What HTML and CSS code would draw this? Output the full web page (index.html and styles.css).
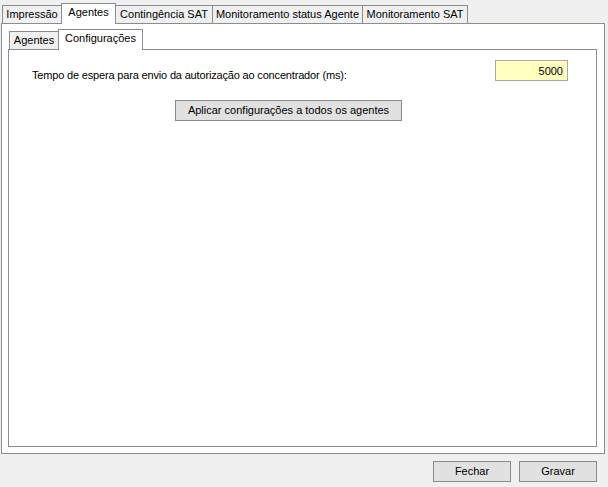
FILE: index.html
```html
<!DOCTYPE html>
<html lang="pt">
<head>
<meta charset="utf-8">
<link rel="stylesheet" href="styles.css">
</head>
<body>
<div class="window">
  <div class="tabstrip outer-strip">
    <div class="tab">Impressão</div>
    <div class="tab active">Agentes</div>
    <div class="tab">Contingência SAT</div>
    <div class="tab">Monitoramento status Agente</div>
    <div class="tab">Monitoramento SAT</div>
  </div>
  <div class="panel outer-panel">
    <div class="tabstrip inner-strip">
      <div class="tab">Agentes</div>
      <div class="tab active">Configurações</div>
    </div>
    <div class="panel inner-panel">
      <div class="field-row">
        <span class="label">Tempo de espera para envio da autorização ao concentrador (ms):</span>
        <input class="num-input" type="text" value="5000">
      </div>
      <button class="btn apply-btn" type="button">Aplicar configurações a todos os agentes</button>
    </div>
  </div>
  <div class="footer">
    <button class="btn foot-btn" type="button">Fechar</button>
    <button class="btn foot-btn" type="button">Gravar</button>
  </div>
</div>
</body>
</html>
```

FILE: styles.css
```css
* { box-sizing: border-box; }
html, body {
  margin: 0;
  padding: 0;
  background: #f0f0f0;
  width: 608px;
  height: 487px;
  overflow: hidden;
}
body {
  font-family: "Liberation Sans", Arial, sans-serif;
  font-size: 11px;
  color: #000;
}
.window {
  padding-left: 1px;
}
.tabstrip {
  display: flex;
  align-items: flex-end;
  height: 20px;
  padding-left: 1px;
}
.outer-strip {
  margin-top: 3px;
}
.tab {
  height: 18px;
  padding: 0 6px;
  border: 1px solid #898c95;
  border-bottom: none;
  background: #f0f0f0;
  display: flex;
  align-items: center;
  justify-content: center;
  margin-left: -1px;
  white-space: nowrap;
  line-height: 1;
}
.tab:first-child { margin-left: 0; }
.tab.active {
  height: 21px;
  margin-bottom: -1px;
  background: #fff;
  position: relative;
  z-index: 1;
  padding-bottom: 3px;
}
.outer-strip .tab:nth-child(1) { width: 60px; }
.outer-strip .tab:nth-child(2) { width: 55px; }
.outer-strip .tab:nth-child(3) { width: 98px; }
.outer-strip .tab:nth-child(4) { width: 151px; }
.outer-strip .tab:nth-child(5) { width: 106px; }
.inner-strip .tab:nth-child(1) { width: 50px; }
.inner-strip .tab:nth-child(2) { width: 85px; }
.panel {
  border: 1px solid #898c95;
  background: #fff;
}
.outer-panel {
  width: 604px;
  height: 431px;
  padding: 5px 7px 0 6px;
}
.inner-strip {
  padding-left: 1px;
}
.inner-panel {
  width: 589px;
  height: 398px;
  padding: 10px 28px 0 23px;
}
.field-row {
  display: flex;
  justify-content: space-between;
  align-items: flex-start;
  height: 21px;
}
.label {
  margin-top: 9px;
  line-height: 13px;
  letter-spacing: -0.17px;
}
.num-input {
  width: 73px;
  height: 21px;
  border: 1px solid #a9a9a9;
  background: #ffffc0;
  font: inherit;
  text-align: right;
  padding: 0 4px;
  outline: none;
  color: #000;
}
.btn {
  height: 21px;
  background: #e1e1e1;
  border: 1px solid #8a8a8a;
  font: inherit;
  color: #000;
  padding: 0;
  line-height: 1;
}
.apply-btn {
  display: block;
  width: 227px;
  margin: 19px 0 0 143px;
}
.footer {
  display: flex;
  justify-content: flex-end;
  gap: 8px;
  padding-right: 11px;
  margin-top: 7px;
}
.foot-btn {
  width: 78px;
}
```
